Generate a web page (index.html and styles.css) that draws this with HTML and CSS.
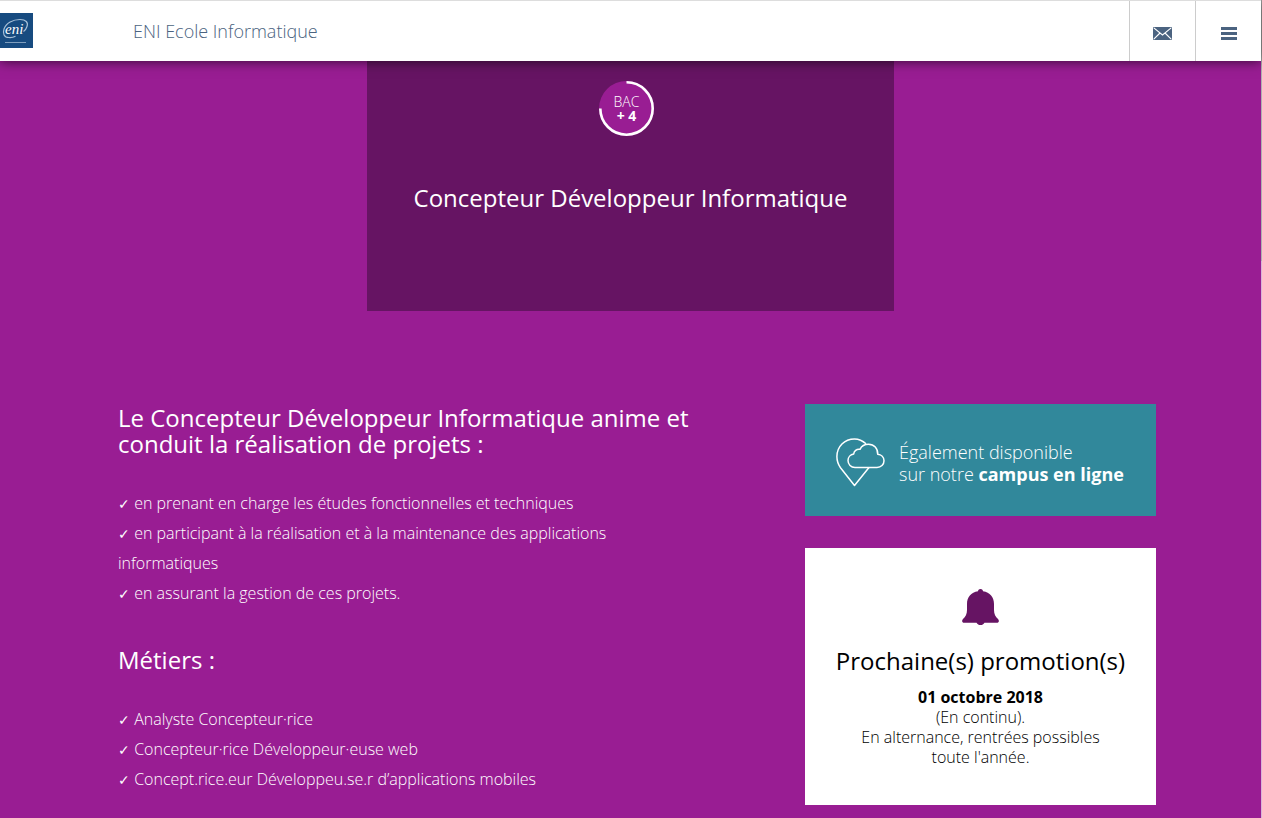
FILE: index.html
```html
<!DOCTYPE html>
<html lang="fr">
<head>
<meta charset="utf-8">
<meta name="viewport" content="width=device-width, initial-scale=1">
<title>Concepteur Développeur Informatique - ENI Ecole Informatique</title>
<link rel="stylesheet" href="styles.css">
</head>
<body>
<div class="shell">
<div class="page">
  <header class="topbar">
    <a class="logo" href="#" aria-label="ENI">
      <svg width="33" height="35" viewBox="0 0 33 35" aria-hidden="true">
        <rect width="33" height="35" fill="#174b80"/>
        <path d="M9 24.500C4 24.500 2.500 20.500 4 16C6 10 13 6.500 20 6.500C26 6.500 28.500 9.500 27 13.500C26.200 16 25 17.500 23.500 18.500" fill="none" stroke="#a9c1d8" stroke-width="1.200"/>
        <path d="M9 24.500C12 24.700 14 24 15.500 23.200" fill="none" stroke="#a9c1d8" stroke-width="1.200"/>
        <path d="M5 29.500H26" stroke="#7f9fbe" stroke-width="1"/>
        <text class="logo-text" x="5" y="21">eni</text>
      </svg>
    </a>
    <a class="brand" href="#">ENI Ecole Informatique</a>
    <button class="tool" type="button" aria-label="Contact">
      <svg width="19" height="13" viewBox="0 0 19 13" aria-hidden="true">
        <rect width="19" height="13" rx="1" fill="#4b6380"/>
        <path d="M.8 .8L9.500 8L18.200 .8M.8 12.200L7 6M18.200 12.200L12 6" fill="none" stroke="#fff" stroke-width="1.100"/>
      </svg>
    </button>
    <button class="tool" type="button" aria-label="Menu">
      <svg width="16" height="13" viewBox="0 0 16 13" aria-hidden="true">
        <path d="M0 1.500H16M0 6.500H16M0 11.500H16" stroke="#4b6380" stroke-width="2.800"/>
      </svg>
    </button>
  </header>

  <section class="hero">
    <div class="badge">
      <svg class="badge-ring" viewBox="0 0 55 55" aria-hidden="true">
        <circle cx="27.500" cy="27.500" r="27.500" fill="#991d93"/>
        <path d="M27.500 1.300A26.200 26.200 0 1 1 1.300 27.500" fill="none" stroke="#fff" stroke-width="2.600"/>
      </svg>
      <p class="badge-text">BAC<br><strong>+ 4</strong></p>
    </div>
    <h1 class="title">Concepteur Développeur Informatique</h1>
  </section>

  <main class="content">
    <div class="story">
      <h2 class="heading">Le Concepteur Développeur Informatique anime et conduit la réalisation de projets :</h2>
      <ul class="checks">
        <li><span class="tick">✓</span> en prenant en charge les études fonctionnelles et techniques</li>
        <li><span class="tick">✓</span> en participant à la réalisation et à la maintenance des applications informatiques</li>
        <li><span class="tick">✓</span> en assurant la gestion de ces projets.</li>
      </ul>
      <h2 class="heading">Métiers :</h2>
      <ul class="checks">
        <li><span class="tick">✓</span> Analyste Concepteur·rice</li>
        <li><span class="tick">✓</span> Concepteur·rice Développeur·euse web</li>
        <li><span class="tick">✓</span> Concept.rice.eur Développeu.se.r d’applications mobiles</li>
      </ul>
    </div>

    <aside class="side">
      <a class="campus" href="#">
        <svg width="49" height="49" viewBox="0 0 49 49" fill="none" stroke="#fff" stroke-width="1.500" stroke-linejoin="round" aria-hidden="true">
          <path d="M30 5.800C26.500 2.500 22.500 .9 18.500 .9C8.500 .9 .9 8.500 .9 18.500C.9 23 2.200 26.500 4.500 29.700L18.500 47.500L33 29.500"/>
          <path d="M19 29.500H41C45 29.500 48 26.600 48 22.800C48 19.300 45.300 16.600 41.700 16.300C42 10.300 38 6.300 32.500 6.300C28.500 6.300 25.500 8.200 24 11.300C20.500 10.800 18 13 17.700 16C14.500 16.500 12 19.300 12 22.600C12 26.500 15 29.500 19 29.500Z"/>
        </svg>
        <span>Également disponible<br>sur notre <strong>campus en ligne</strong></span>
      </a>
      <section class="promo">
        <svg class="bell" width="37" height="36" viewBox="0 0 37 36" aria-hidden="true">
          <path d="M18.500 0C20.200 0 21 1 21 2.300C28 3.200 32 8.500 32 15V21C32 25 33.500 28 36 30C37.500 31.500 37 33.700 34.800 33.700H22.500C21.500 35.200 20.200 36 18.500 36C16.800 36 15.500 35.200 14.500 33.700H2.200C0 33.700-.5 31.500 1 30C3.500 28 5 25 5 21V15C5 8.500 9 3.200 16 2.300C16 1 16.800 0 18.500 0Z" fill="#661463"/>
        </svg>
        <h2 class="promo-title">Prochaine(s) promotion(s)</h2>
        <p class="promo-text"><strong>01 octobre 2018</strong><br>(En continu).<br>En alternance, rentrées possibles<br>toute l'année.</p>
      </section>
    </aside>
  </main>
</div>
<div class="edge" aria-hidden="true"></div>
</div>
</body>
</html>
```
FILE: styles.css
```css
* {
  box-sizing: border-box;
}

body {
  margin: 0;
  background: #991d93;
  color: #fff;
  font: 300 16px/20px "Open Sans", "Noto Sans", sans-serif;
}

h1, h2, p, ul {
  margin: 0;
  padding: 0;
}

h1, h2 {
  font-size: 24px;
  line-height: 26px;
  font-weight: 400;
}

a {
  color: inherit;
  text-decoration: none;
}

strong {
  font-weight: 700;
}

.shell {
  display: flex;
  height: 100vh;
  overflow: hidden;
}

.page {
  flex: 1;
}

.edge {
  width: 1px;
  background: linear-gradient(#b0b0b0 261px, #d9b3d7 261px);
}

.topbar {
  position: relative;
  display: flex;
  align-items: stretch;
  height: 61px;
  border-top: 1px solid #ddd;
  background: #fff;
  color: #4b6380;
  box-shadow: 0 0 12px rgba(0, 0, 0, 0.7);
}

.logo {
  width: 133px;
  padding-top: 12px;
}

.logo-text {
  fill: #fff;
  font: italic 400 15px "Liberation Serif", serif;
}

.brand {
  flex: 1;
  font-size: 18px;
  line-height: 60px;
}

.tool {
  display: flex;
  align-items: center;
  justify-content: center;
  width: 66px;
  padding: 5px 0 0;
  border: 0;
  border-left: 1px solid #ccc;
  background: none;
}

.hero {
  display: flex;
  flex-direction: column;
  align-items: center;
  width: 100%;
  max-width: 527px;
  min-height: 250px;
  margin: 0 auto;
  padding-top: 20px;
  background: #661463;
}

.badge {
  display: grid;
  width: 55px;
  height: 55px;
  margin-right: 8px;
  place-items: center;
}

.badge-ring, .badge-text {
  grid-area: 1 / 1;
}

.badge-ring {
  width: 55px;
  height: 55px;
}

.badge-text {
  font-size: 14px;
  line-height: 14px;
  text-align: center;
}

.title {
  margin-top: 49px;
}

.content {
  display: grid;
  grid-template-columns: 1fr 351px;
  column-gap: 102px;
  align-items: start;
  padding: 93px 105px 0 118px;
}

.heading {
  padding-top: 1px;
}

.checks {
  margin: 31px 0 38px;
  line-height: 30px;
  list-style: none;
}

.tick {
  font-family: "DejaVu Sans", sans-serif;
  font-size: 14px;
  line-height: 14px;
}

.side {
  display: grid;
  gap: 32px;
}

.campus {
  display: flex;
  align-items: center;
  gap: 14px;
  min-height: 112px;
  padding: 5px 31px 0;
  background: #31889b;
  font-size: 18px;
  line-height: 22px;
}

.promo {
  min-height: 257px;
  padding: 41px 16px 0;
  background: #fff;
  color: #000;
  text-align: center;
}

.bell {
  display: block;
  margin: 0 auto;
}

.promo-title {
  margin: 23px 0 13px;
}
```
